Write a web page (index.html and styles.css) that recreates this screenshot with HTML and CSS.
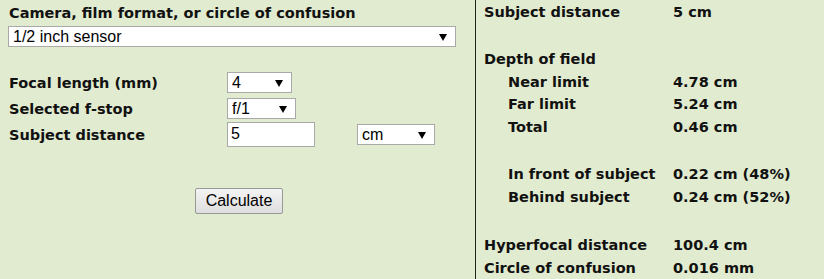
FILE: index.html
```html
<!DOCTYPE html>
<html lang="en">
<head>
  <meta charset="UTF-8">
  <title>Depth of Field Calculator</title>
  <link rel="stylesheet" href="styles.css">
</head>
<body>
  <div class="calc">
    <div class="inputs">
      <div class="title">Camera, film format, or circle of confusion</div>
      <div class="select wide">
        <select>
          <option>1/2 inch sensor</option>
        </select>
      </div>

      <div class="row first">
        <label>Focal length (mm)</label>
        <div class="select focal">
          <select><option>4</option></select>
        </div>
      </div>
      <div class="row">
        <label>Selected f-stop</label>
        <div class="select fstop">
          <select><option>f/1</option></select>
        </div>
      </div>
      <div class="row">
        <label>Subject distance</label>
        <input type="text" class="distance" value="5">
        <div class="select unit">
          <select><option>cm</option></select>
        </div>
      </div>

      <div class="actions">
        <button>Calculate</button>
      </div>
    </div>

    <div class="results">
      <div class="label">Subject distance</div><div>5 cm</div>
      <div class="gap"></div>
      <div class="label">Depth of field</div><div></div>
      <div class="label sub">Near limit</div><div>4.78 cm</div>
      <div class="label sub">Far limit</div><div>5.24 cm</div>
      <div class="label sub">Total</div><div>0.46 cm</div>
      <div class="gap"></div>
      <div class="label sub">In front of subject</div><div>0.22 cm (48%)</div>
      <div class="label sub">Behind subject</div><div>0.24 cm (52%)</div>
      <div class="gap"></div>
      <div class="label">Hyperfocal distance</div><div>100.4 cm</div>
      <div class="label">Circle of confusion</div><div>0.016 mm</div>
    </div>
  </div>
</body>
</html>
```

FILE: styles.css
```css
/* General styles */
body {
  margin: 0;
  padding: 0;
  background-color: #e1ebcf;
  color: #111;
  font-family: "DejaVu Sans", Verdana, sans-serif;
  font-weight: bold;
  font-size: 14.5px;
}

.calc {
  display: flex;
  height: 279px;
}

/* Left side: inputs */
.inputs {
  width: 466px;
  border-right: 1px solid #222;
  padding-left: 9px;
}

.title {
  margin-top: 4px;
  height: 22px;
  line-height: 18px;
}

.select {
  position: relative;
  display: inline-block;
  height: 21px;
  box-sizing: border-box;
  border: 1px solid #a9a9a9;
  background: #fff;
}

.select::after {
  content: "";
  position: absolute;
  right: 8px;
  top: 7px;
  border-left: 4px solid transparent;
  border-right: 4px solid transparent;
  border-top: 7px solid #000;
  pointer-events: none;
}

.select select {
  appearance: none;
  -webkit-appearance: none;
  border: none;
  background: transparent;
  outline: none;
  width: 100%;
  height: 100%;
  padding: 0 0 0 4px;
  margin: 0;
  font-family: "Liberation Sans", Arial, sans-serif;
  font-size: 16px;
  color: #000;
}

.select.wide {
  width: 448px;
  margin-left: -1px;
}

.row {
  display: flex;
  align-items: center;
  height: 26px;
}

.row.first {
  margin-top: 22px;
}

.row label {
  width: 218px;
  padding-top: 2px;
}

.select.focal {
  width: 65px;
}

.select.fstop {
  width: 69px;
}

.distance {
  width: 88px;
  height: 25px;
  box-sizing: border-box;
  border: 1px solid #a9a9a9;
  padding: 0 3px;
  margin: 0;
  font-family: "Liberation Sans", Arial, sans-serif;
  font-size: 16px;
  color: #000;
}

.select.unit {
  width: 78px;
  margin-left: 42px;
}

.actions {
  margin-top: 41px;
  padding-left: 186px;
}

button {
  width: 88px;
  height: 26px;
  font-family: "Liberation Sans", Arial, sans-serif;
  font-size: 16px;
  color: #000;
  background: linear-gradient(#f4f4f4, #dedede);
  border: 1px solid #999;
  border-radius: 2px;
  padding: 0;
}

/* Right side: results */
.results {
  flex: 1;
  display: grid;
  grid-template-columns: 189px auto;
  grid-template-rows: 24px 23px 24px 22px 22px 23px 24px 24px 22px 25px 23px 23px;
  align-content: start;
  align-items: center;
  padding-left: 8px;
}

.results .gap {
  grid-column: 1 / 3;
}

.results .sub {
  padding-left: 24px;
}
```
